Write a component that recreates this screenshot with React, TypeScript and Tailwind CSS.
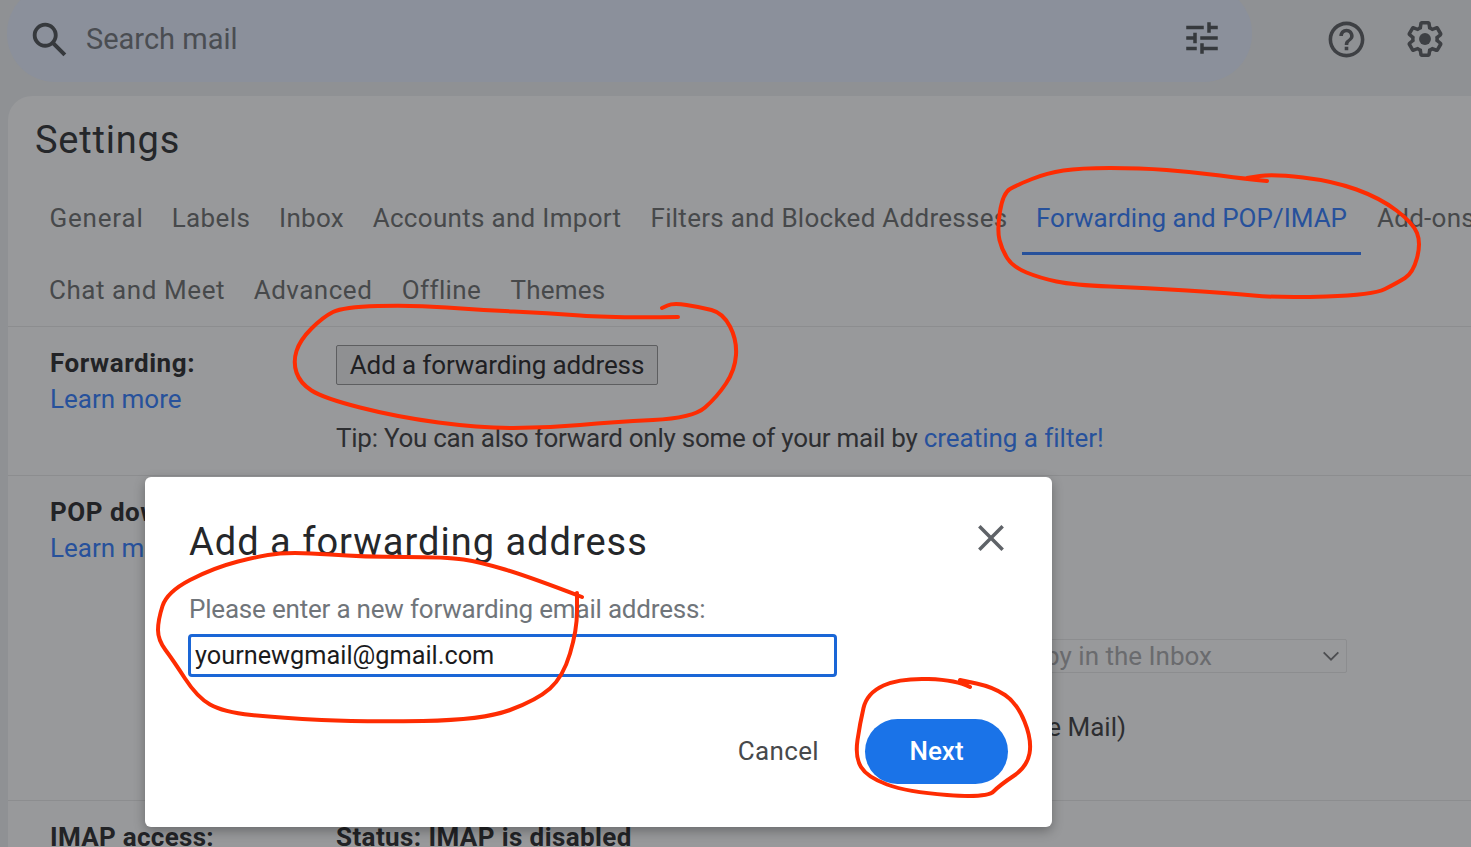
const scribbles: [number, number][][] = [
  [[1267,181],[1247,179],[1193,172],[1140,168],[1080,168],[1047,173],[1017,185],[1003,193],[997,230],[1002,250],[1013,267],[1040,278],[1073,285],[1147,288],[1227,293],[1280,298],[1373,295],[1397,283],[1413,273],[1421,243],[1413,223],[1380,198],[1333,181],[1273,174],[1247,178]],
  [[678,317],[613,318],[547,313],[480,310],[413,305],[343,307],[323,317],[300,340],[293,362],[300,383],[323,398],[397,417],[480,428],[547,428],[613,422],[693,418],[717,397],[735,370],[737,340],[723,313],[700,307],[673,303],[662,308]],
  [[582,597],[530,577],[480,562],[447,557],[363,557],[297,552],[263,555],[213,568],[167,592],[158,620],[158,640],[173,660],[197,697],[223,712],[280,718],[363,722],[483,720],[537,700],[563,677],[577,630],[577,593]],
  [[970,687],[957,680],[900,678],[867,693],[860,723],[855,757],[867,777],[907,792],[987,798],[1000,785],[1027,767],[1032,740],[1017,703],[993,687],[960,680]],
];

function smoothPath(pts: [number, number][]) {
  let d = `M${pts[0][0]} ${pts[0][1]}`;
  for (let i = 1; i < pts.length - 1; i++) {
    const mx = (pts[i][0] + pts[i + 1][0]) / 2;
    const my = (pts[i][1] + pts[i + 1][1]) / 2;
    d += ` Q${pts[i][0]} ${pts[i][1]} ${mx} ${my}`;
  }
  const last = pts[pts.length - 1];
  return d + ` L${last[0]} ${last[1]}`;
}

function Tab({ label, active, className }: { label: string; active?: boolean; className: string }) {
  return (
    <div
      className={`relative flex h-[72px] shrink-0 items-center justify-center whitespace-nowrap text-[26px] ${
        active ? "text-[#27519b]" : "text-[#47494b]"
      } ${className}`}
    >
      {label}
      {active && <div className="absolute right-0 bottom-[-1px] left-0 h-[3px] bg-[#27519b]" />}
    </div>
  );
}

export default function App() {
  return (
    <div className="relative h-[847px] w-[1471px] overflow-hidden bg-[#8f9194] font-['Roboto',sans-serif]">
      {/* top bar */}
      <header className="flex h-[96px] items-start">
        <div className="mt-[-15px] ml-[7px] flex h-[97px] w-[1245px] items-center rounded-[48px] bg-[#8b909b] pt-[13px] pr-[29px] pl-[20px]">
          <svg viewBox="0 0 24 24" className="h-[46px] w-[46px] fill-[#36393d]">
            <path d="M20.49 19l-5.73-5.73C15.53 12.2 16 10.91 16 9.5A6.5 6.5 0 1 0 9.5 16c1.41 0 2.7-.47 3.77-1.24L19 20.49 20.49 19zM5 9.5C5 7.01 7.01 5 9.5 5S14 7.01 14 9.5 11.99 14 9.5 14 5 11.99 5 9.5z" />
          </svg>
          <span className="ml-[13px] text-[29px] text-[#4a4d52]">Search mail</span>
          <svg viewBox="0 0 24 24" className="mt-[-4px] ml-auto h-[42px] w-[42px] fill-[#36393d]">
            <path d="M3 17v2h6v-2H3zM3 5v2h10V5H3zm10 16v-2h8v-2h-8v-2h-2v6h2zM7 9v2H3v2h4v2h2V9H7zm14 4v-2H11v2h10zm-6-4h2V7h4V5h-4V3h-2v6z" />
          </svg>
        </div>
        <div className="flex h-[78px] items-center">
          <svg viewBox="0 0 24 24" className="ml-[73px] h-[43px] w-[43px] fill-[#3e4044]">
            <path d="M11 18h2v-2h-2v2zm1-16C6.48 2 2 6.48 2 12s4.48 10 10 10 10-4.48 10-10S17.52 2 12 2zm0 18c-4.41 0-8-3.59-8-8s3.59-8 8-8 8 3.59 8 8-3.59 8-8 8zm0-14c-2.21 0-4 1.79-4 4h2c0-1.1.9-2 2-2s2 .9 2 2c0 2-3 1.75-3 5h2c0-2.25 3-2.5 3-5 0-2.21-1.79-4-4-4z" />
          </svg>
          <svg viewBox="0 0 24 24" className="ml-[36px] h-[42px] w-[42px] fill-[#3e4044]">
            <path d="M13.85 22.25h-3.7c-.74 0-1.36-.54-1.45-1.27l-.27-1.89c-.27-.14-.53-.29-.79-.46l-1.8.72c-.7.26-1.47-.03-1.81-.65L2.2 15.53c-.35-.66-.2-1.44.36-1.88l1.53-1.19c-.01-.15-.02-.3-.02-.46 0-.15.01-.31.02-.46l-1.52-1.19c-.59-.45-.74-1.26-.37-1.88l1.85-3.19c.34-.62 1.11-.9 1.79-.63l1.81.73c.26-.17.52-.32.78-.46l.27-1.91c.09-.7.71-1.25 1.44-1.25h3.7c.74 0 1.36.54 1.45 1.27l.27 1.89c.27.14.53.29.79.46l1.8-.72c.71-.26 1.48.03 1.82.65l1.84 3.18c.36.66.2 1.44-.36 1.88l-1.52 1.19c.01.15.02.3.02.46s-.01.31-.02.46l1.52 1.19c.56.45.72 1.23.37 1.86l-1.86 3.22c-.34.62-1.11.9-1.8.63l-1.8-.72c-.26.17-.52.32-.78.46l-.27 1.91c-.1.68-.72 1.22-1.46 1.22zm-3.23-2h2.76l.37-2.55.53-.22c.44-.18.88-.44 1.34-.78l.45-.34 2.38.96 1.38-2.4-2.03-1.58.07-.56c.03-.26.06-.51.06-.78s-.03-.53-.06-.78l-.07-.56 2.03-1.58-1.39-2.4-2.39.96-.45-.35c-.42-.32-.87-.58-1.33-.77l-.52-.22-.37-2.55h-2.76l-.37 2.55-.53.21c-.44.19-.88.44-1.34.79l-.45.33-2.38-.95-1.39 2.39 2.03 1.58-.07.56a7 7 0 0 0-.06.79c0 .26.02.53.06.78l.07.56-2.03 1.58 1.38 2.4 2.39-.96.45.35c.43.33.86.58 1.33.77l.53.22.38 2.55z" />
            <circle cx="12" cy="12" r="3.4" />
          </svg>
        </div>
      </header>

      {/* settings panel */}
      <main className="ml-[8px] h-[751px] rounded-tl-[24px] bg-[#98999b]">
        <h1 className="pt-[18px] pl-[27px] text-[38px] leading-[52px] tracking-[0.8px] text-[#25272a]">Settings</h1>

        <div className="mt-[16px] border-b border-[#8c8d8f] pl-[42px]">
          <div className="flex">
            <Tab label="General" className="w-[93px] tracking-[0.8px]" />
            <Tab label="Labels" className="ml-[29px] w-[78px] tracking-[0.4px]" />
            <Tab label="Inbox" className="ml-[29px] w-[65px] tracking-[0.27px]" />
            <Tab label="Accounts and Import" className="ml-[29px] w-[248px] tracking-[0.3px]" />
            <Tab label="Filters and Blocked Addresses" className="ml-[30px] w-[356px] tracking-[0.27px]" />
            <Tab label="Forwarding and POP/IMAP" active className="ml-[15px] w-[339px]" />
            <Tab label="Add-ons" className="ml-[15px] w-[100px] tracking-[0.27px]" />
          </div>
          <div className="flex">
            <Tab label="Chat and Meet" className="w-[174px] tracking-[0.57px]" />
            <Tab label="Advanced" className="ml-[30px] w-[118px] tracking-[0.5px]" />
            <Tab label="Offline" className="ml-[30px] w-[79px] tracking-[0.4px]" />
            <Tab label="Themes" className="ml-[30px] w-[94px] tracking-[0.2px]" />
          </div>
        </div>

        <section className="flex h-[149px] border-b border-[#8c8d8f] pt-[18px] pl-[42px] text-[26px]">
          <div className="w-[286px] shrink-0">
            <div className="font-bold leading-[36px] tracking-[0.55px] text-[#222326]">Forwarding:</div>
            <div className="leading-[36px] text-[#27519b]">Learn more</div>
          </div>
          <div>
            <button className="h-[40px] w-[322px] rounded-[2px] border border-[#5d5e60] bg-[#8f9092] tracking-[-0.13px] text-[#1f2023]">
              Add a forwarding address
            </button>
            <p className="mt-[35px] leading-[36px] tracking-[-0.26px] whitespace-nowrap text-[#2d2e31]">
              Tip: You can also forward only some of your mail by{" "}
              <span className="tracking-[-0.03px] text-[#27519b]">creating a filter!</span>
            </p>
          </div>
        </section>

        <section className="flex h-[325px] border-b border-[#8c8d8f] pt-[18px] pl-[42px] text-[26px]">
          <div className="w-[286px] shrink-0">
            <div className="font-bold leading-[36px] tracking-[0.5px] text-[#222326]">POP download:</div>
            <div className="leading-[36px] text-[#27519b]">Learn more</div>
          </div>
          <div>
            <div className="mt-[145px] flex h-[34px] w-[1011px] items-center justify-end rounded-[2px] border border-[#8c8d8f] pr-[4px]">
              <span className="mr-[108px] text-[#6a6b6e]">keep Gmail's copy in the Inbox</span>
              <svg viewBox="0 0 24 24" className="h-[22px] w-[22px] fill-none stroke-[#4d4e51] stroke-2">
                <path d="M4 8l8 8 8-8" />
              </svg>
            </div>
            <p className="mt-[36px] w-[790px] text-right leading-[36px] whitespace-nowrap text-[#2d2e31]">
              3. Configure your email client (e.g. Outlook, Eudora, Netscape Mail)
            </p>
          </div>
        </section>

        <section className="flex pt-[18px] pl-[42px] text-[26px] font-bold text-[#222326]">
          <div className="w-[286px] shrink-0 leading-[36px] tracking-[0.3px]">IMAP access:</div>
          <div className="leading-[36px] tracking-[0.4px]">Status: IMAP is disabled</div>
        </section>
      </main>

      {/* dialog */}
      <div className="absolute top-[477px] left-[145px] h-[350px] w-[907px] rounded-[6px] bg-white pt-[39px] pr-[44px] pl-[44px] shadow-[0_4px_12px_rgba(0,0,0,0.3)]">
        <div className="flex items-start justify-between">
          <h2 className="text-[38px] leading-[52px] tracking-[1px] text-[#25272a]">Add a forwarding address</h2>
          <svg viewBox="0 0 24 24" className="mt-[8px] mr-[3px] h-[28px] w-[28px] fill-none stroke-[#5f6368] stroke-[3]">
            <path d="M2 2l20 20M22 2L2 22" />
          </svg>
        </div>
        <label className="mt-[23px] block text-[26px] leading-[36px] tracking-[-0.2px] text-[#70757a]">
          Please enter a new forwarding email address:
        </label>
        <div className="mt-[7px] ml-[-1px] flex h-[43px] w-[649px] items-center rounded-[4px] border-[3px] border-[#1a66d6] pl-[4px] text-[25.3px] text-[#1b1b1d]">
          yournewgmail@gmail.com
        </div>
        <div className="mt-[42px] flex items-center justify-end">
          <span className="text-[26px] tracking-[0.35px] text-[#47494b]">Cancel</span>
          <button className="ml-[46px] h-[65px] w-[143px] rounded-full bg-[#1a73e8] text-[26px] font-medium text-white">
            Next
          </button>
        </div>
      </div>

      {/* red pen marks */}
      <svg viewBox="0 0 1471 847" className="pointer-events-none absolute inset-0 h-[847px] w-[1471px] fill-none stroke-[#fe2c02] stroke-[4]">
        {scribbles.map((pts, i) => (
          <path key={i} d={smoothPath(pts)} strokeLinecap="round" strokeLinejoin="round" />
        ))}
      </svg>
    </div>
  );
}
